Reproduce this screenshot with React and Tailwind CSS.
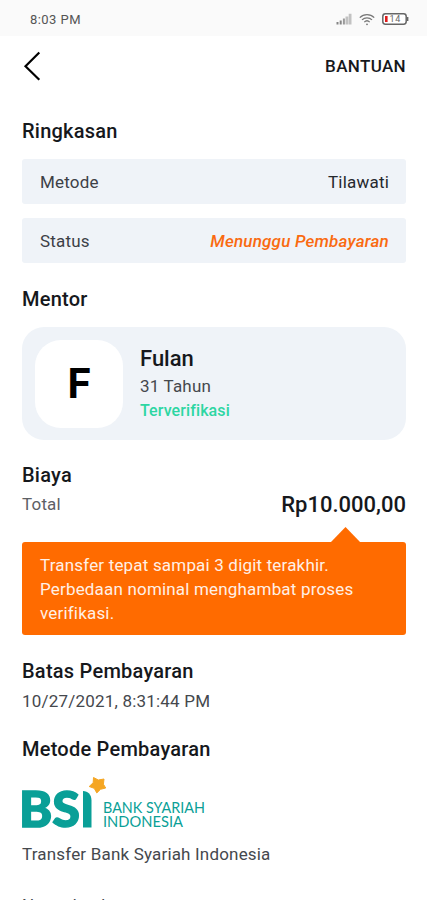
import React from 'react';

const summary = [
  { label: "Metode", value: "Tilawati", style: "text-[#25282d]" },
  { label: "Status", value: "Menunggu Pembayaran", style: "text-[#fa6a10] italic font-medium" },
];

const StatusBar = () => (
  <div className="h-9 bg-[#fafafa] pl-[30px] pr-[18px] flex items-center justify-between">
    <span className="text-[13px] leading-none tracking-[0.45px] text-[#555] mt-[3px]">8:03 PM</span>
    <div className="flex items-center gap-[7px] mt-[2px]">
      <svg width="16" height="12" viewBox="0 0 16 12">
        <path d="M.5 9h2v2.500h-2zM3.700 7.500h2v4h-2z" fill="#858585" />
        <path d="M6.900 5.500h2v6h-2z" fill="#9a9a9a" />
        <path d="M9.500 3.500h2.800v8H9.500zM12.700.8h2.800v10.700h-2.800z" fill="#c2c2c2" />
      </svg>
      <svg width="16" height="13" viewBox="0 0 16 13" fill="none" stroke="#777" strokeWidth="1.300">
        <path d="M.8 4.600a10.200 10.200 0 0 1 14.400 0" />
        <path d="M3 6.900a7 7 0 0 1 10 0" />
        <path d="M5.300 9.100a3.900 3.900 0 0 1 5.400 0" />
        <circle cx="8" cy="11.300" r=".9" fill="#777" stroke="none" />
      </svg>
      <svg width="27" height="12" viewBox="0 0 27 12">
        <rect x=".8" y=".8" width="23.400" height="10.400" rx="2.600" fill="#fff" stroke="#666" strokeWidth="1.500" />
        <path d="M25.600 4v4" stroke="#666" strokeWidth="1.600" />
        <rect x="3" y="3" width="2.600" height="6" fill="#e01b1b" />
        <text x="7.600" y="9.300" fontSize="9" fill="#666" fontFamily="Roboto, sans-serif" letterSpacing=".6">14</text>
      </svg>
    </div>
  </div>
);

const BankLogo = () => (
  <svg width="186" height="54" viewBox="0 0 186 54" className="block overflow-visible">
    <text x="-3" y="51" fontFamily="Lato, sans-serif" fontWeight="900" fontSize="49" fill="#0a9f97" stroke="#0a9f97" strokeWidth="1.500" textLength="61" lengthAdjust="spacingAndGlyphs">BS</text>
    <path d="M61 15c5 .3 8.500 3.500 8.500 9.500v27H61z" fill="#0a9f97" />
    <path d="M71.500 1.500l4.800 2.500 5.700-1-.6 5.200 2.300 3.800-5.200 1.300-3.700 3.600-2.600-4.600-5-1.800 4-3.800z" fill="#f5a623" stroke="#f5a623" strokeLinejoin="round" />
    <text x="81" y="37" fontFamily="Lato, sans-serif" fontSize="15" fill="#0a9f97" textLength="102" lengthAdjust="spacingAndGlyphs">BANK SYARIAH</text>
    <text x="81" y="51" fontFamily="Lato, sans-serif" fontSize="15" fill="#0a9f97" textLength="80" lengthAdjust="spacingAndGlyphs">INDONESIA</text>
  </svg>
);

const Title = ({ children }) => (
  <h2 className="text-[20px] leading-6 font-medium tracking-[0.24px] text-[#16181c]">{children}</h2>
);

export default function App() {
  return (
    <div className="h-[900px] overflow-hidden bg-white font-['Roboto',sans-serif]">
      <StatusBar />

      {/* Header */}
      <header className="h-[59px] pl-[22px] pr-[21px] flex items-center justify-between">
        <svg width="20" height="30" viewBox="0 0 20 30" fill="none" stroke="#000" strokeWidth="2.200">
          <path d="M17.300 1.500L3.500 15.300l13.800 13.400" />
        </svg>
        <button className="text-[17px] leading-6 font-medium text-[#16181c] tracking-[0.35px]">BANTUAN</button>
      </header>

      <main className="pl-[22px] pr-[21px] pt-6">
        <Title>Ringkasan</Title>
        <div className="mt-4 flex flex-col gap-[14px]">
          {summary.map((row) => (
            <div key={row.label} className="h-[45px] pt-[2px] pl-[18px] pr-[17px] rounded-[3px] bg-[#eff3f8] flex items-center justify-between text-[17px] tracking-[0.2px]">
              <span className="text-[#3c4046]">{row.label}</span>
              <span className={row.style}>{row.value}</span>
            </div>
          ))}
        </div>

        {/* Mentor */}
        <div className="mt-[24px]">
          <Title>Mentor</Title>
        </div>
        <div className="mt-4 h-[113px] rounded-[22px] bg-[#eff3f8] pl-[13px] flex items-center">
          <div className="w-[88px] h-[88px] rounded-[26px] bg-white flex items-center justify-center text-[42px] font-bold text-black">F</div>
          <div className="ml-[17px] -mt-px">
            <p className="text-[22px] leading-7 font-medium text-[#16181c]">Fulan</p>
            <p className="text-[17px] leading-[26px] tracking-[0.18px] text-[#45484d]">31 Tahun</p>
            <p className="text-[16px] leading-[23px] font-medium tracking-[0.1px] text-[#2dd6a3]">Terverifikasi</p>
          </div>
        </div>

        {/* Biaya */}
        <div className="mt-[23px]">
          <Title>Biaya</Title>
          <div className="mt-[2px] h-8 flex items-center justify-between">
            <span className="text-[17px] tracking-[0.18px] text-[#5d6065]">Total</span>
            <span className="-mt-[2px] text-[22px] font-medium text-[#16181c]">Rp10.000,00</span>
          </div>
        </div>
        <div className="relative mt-[21px] h-[93px] rounded-[3px] bg-[#ff6b00] pl-[18px] pt-[11px] text-[17px] leading-6 tracking-[0.18px] text-[#fff0e6]">
          <svg className="absolute right-[45px] -top-[15px]" width="31" height="16" viewBox="0 0 31 16">
            <path d="M0 16L15.500 0 31 16z" fill="#ff6b00" />
          </svg>
          <p>Transfer tepat sampai 3 digit terakhir.</p>
          <p>Perbedaan nominal menghambat proses</p>
          <p>verifikasi.</p>
        </div>

        <div className="mt-6">
          <Title>Batas Pembayaran</Title>
          <p className="mt-[6px] text-[17px] leading-6 tracking-[0.2px] text-[#45484d]">10/27/2021, 8:31:44 PM</p>
        </div>

        <div className="mt-6">
          <Title>Metode Pembayaran</Title>
          <div className="mt-[15px]">
            <BankLogo />
          </div>
          <p className="mt-[12px] text-[17px] leading-6 tracking-[0.18px] text-[#45484d]">Transfer Bank Syariah Indonesia</p>
          <p className="mt-[27px] text-[17px] leading-6 tracking-[0.18px] text-[#45484d]">Nama bank</p>
        </div>
      </main>
    </div>
  );
}
